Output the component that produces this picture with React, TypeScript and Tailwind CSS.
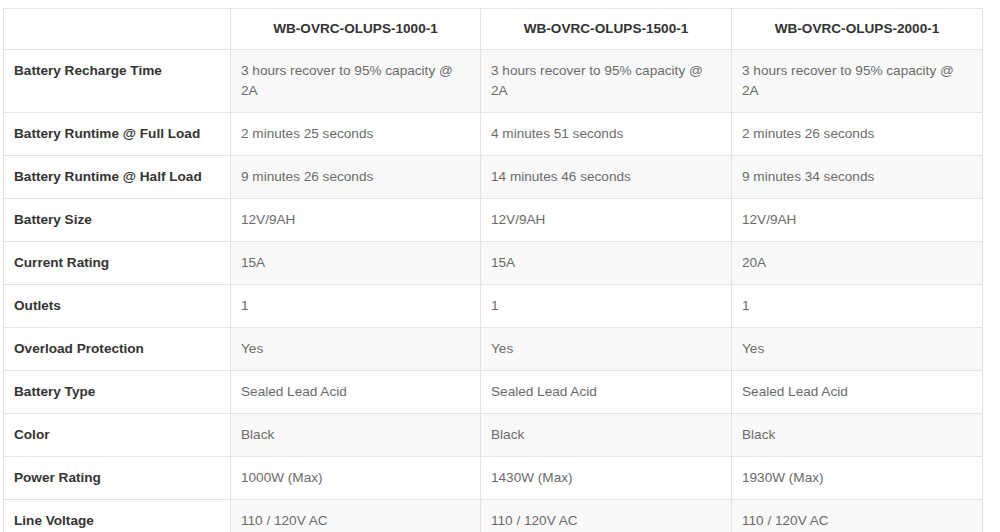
import React from "react";

const models = ["WB-OVRC-OLUPS-1000-1", "WB-OVRC-OLUPS-1500-1", "WB-OVRC-OLUPS-2000-1"];

const specs: [string, string[]][] = [
  ["Battery Recharge Time", ["3 hours recover to 95% capacity @ 2A", "3 hours recover to 95% capacity @ 2A", "3 hours recover to 95% capacity @ 2A"]],
  ["Battery Runtime @ Full Load", ["2 minutes 25 seconds", "4 minutes 51 seconds", "2 minutes 26 seconds"]],
  ["Battery Runtime @ Half Load", ["9 minutes 26 seconds", "14 minutes 46 seconds", "9 minutes 34 seconds"]],
  ["Battery Size", ["12V/9AH", "12V/9AH", "12V/9AH"]],
  ["Current Rating", ["15A", "15A", "20A"]],
  ["Outlets", ["1", "1", "1"]],
  ["Overload Protection", ["Yes", "Yes", "Yes"]],
  ["Battery Type", ["Sealed Lead Acid", "Sealed Lead Acid", "Sealed Lead Acid"]],
  ["Color", ["Black", "Black", "Black"]],
  ["Power Rating", ["1000W (Max)", "1430W (Max)", "1930W (Max)"]],
  ["Line Voltage", ["110 / 120V AC", "110 / 120V AC", "110 / 120V AC"]],
];

export default function App() {
  return (
    <div className="bg-white pl-[3px] pt-[8px] h-[532px] overflow-hidden" style={{ fontFamily: '"Liberation Sans", Arial, sans-serif' }}>
      <table className="border-collapse table-fixed w-[980px] text-[13.6px] leading-[20px]">
        <colgroup>
          <col className="w-[227px]" />
          <col className="w-[250px]" />
          <col className="w-[251px]" />
          <col className="w-[251px]" />
        </colgroup>
        <thead>
          <tr>
            <th className="border border-[#e3e3e3] px-[10px] py-[10px]"></th>
            {models.map((m) => (
              <th key={m} className="border border-[#e3e3e3] px-[10px] py-[10px] text-center font-bold text-[#333]">
                {m}
              </th>
            ))}
          </tr>
        </thead>
        <tbody>
          {specs.map(([label, values], i) => (
            <tr key={label}>
              <td className="border border-[#e3e3e3] px-[10px] py-[11px] align-top font-bold text-[#333] bg-white">
                {label}
              </td>
              {values.map((v, j) => (
                <td
                  key={j}
                  className={
                    "border border-[#e3e3e3] px-[10px] py-[11px] align-top text-[#6b6b6b] " +
                    (i % 2 === 0 ? "bg-[#f9f9f9]" : "bg-white")
                  }
                >
                  {v}
                </td>
              ))}
            </tr>
          ))}
        </tbody>
      </table>
    </div>
  );
}
